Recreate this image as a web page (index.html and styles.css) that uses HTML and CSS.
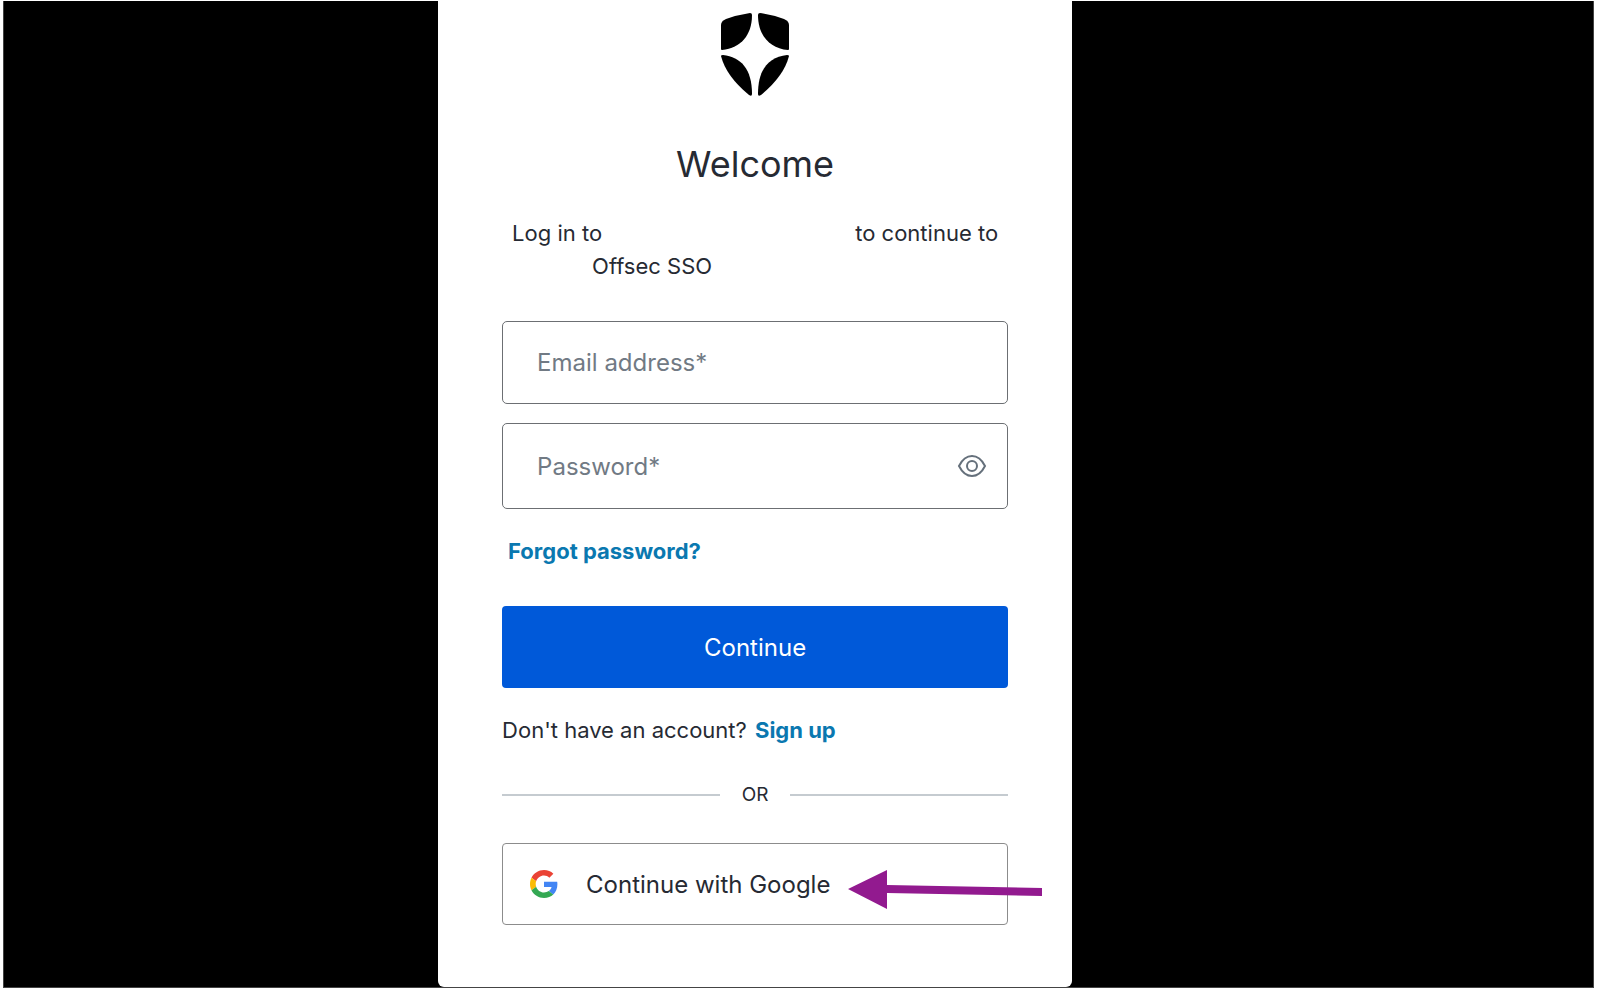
FILE: index.html
```html
<!DOCTYPE html>
<html lang="en">
<head>
    <meta charset="UTF-8">
    <meta name="viewport" content="width=device-width, initial-scale=1.0">
    <title>Log in | Offsec SSO</title>
    <link rel="stylesheet" href="styles.css">
</head>
<body>

<div class="page">
    <main class="card">
        <svg class="logo" viewBox="0 0 68 84" role="img" aria-label="Logo">
            <path d="M31 2C31 22 20 35 1 37Q0 37 0 36V12Q0 8 5 6Q16 2 29 0Q31 0 31 2Z"/>
            <path d="M37 2C37 22 48 35 67 37Q68 37 68 36V12Q68 8 63 6Q52 2 39 0Q37 0 37 2Z"/>
            <path d="M2 42C20 44 31 56 31 81Q31 84 28 82Q5 63 0 43Q0 42 2 42Z"/>
            <path d="M66 42C48 44 37 56 37 81Q37 84 40 82Q63 63 68 43Q68 42 66 42Z"/>
        </svg>

        <h1>Welcome</h1>
        <div class="intro">
            <p class="intro-line"><span>Log in to</span><span>to continue to</span></p>
            <p class="intro-app">Offsec SSO</p>
        </div>

        <form onsubmit="return false">
            <input type="text" id="email" class="field" placeholder="Email address*" aria-label="Email address">
            <div class="password-field">
                <input type="password" id="password" class="field" placeholder="Password*" aria-label="Password">
                <button type="button" class="eye-button" aria-label="Show password" onclick="togglePassword()">
                    <svg viewBox="0 0 30 24">
                        <path d="M2 12C5 6 9 2 15 2S25 6 28 12C25 18 21 22 15 22S5 18 2 12Z"/>
                        <circle cx="15" cy="12" r="5"/>
                    </svg>
                </button>
            </div>
            <a href="#" class="link forgot">Forgot password?</a>
            <button type="submit" class="button submit-button">Continue</button>
        </form>

        <p class="signup">Don't have an account? <a href="#" class="link">Sign up</a></p>

        <div class="divider"><span>OR</span></div>

        <div class="social">
            <button type="button" class="button google-button">
                <svg class="google-icon" viewBox="0 0 48 48">
                    <path fill="#ea4335" d="M24 9.5c3.54 0 6.71 1.22 9.21 3.6l6.85-6.85C35.9 2.38 30.47 0 24 0 14.62 0 6.51 5.38 2.56 13.22l7.98 6.19C12.43 13.72 17.74 9.5 24 9.5z"/>
                    <path fill="#4285f4" d="M46.98 24.55c0-1.57-.15-3.09-.38-4.55H24v9.02h12.94c-.58 2.96-2.26 5.48-4.78 7.18l7.73 6c4.51-4.18 7.09-10.36 7.09-17.65z"/>
                    <path fill="#fbbc05" d="M10.53 28.59c-.48-1.45-.76-2.99-.76-4.59s.27-3.14.76-4.59l-7.98-6.19C.92 16.46 0 20.12 0 24c0 3.88.92 7.54 2.56 10.78l7.97-6.19z"/>
                    <path fill="#34a853" d="M24 48c6.48 0 11.93-2.13 15.89-5.81l-7.73-6c-2.15 1.45-4.92 2.3-8.16 2.3-6.26 0-11.57-4.22-13.47-9.91l-7.98 6.19C6.51 42.62 14.62 48 24 48z"/>
                </svg>
                <span>Continue with Google</span>
            </button>
            <!-- arrow pointing at the Google button -->
            <svg class="arrow" viewBox="0 0 194 40" aria-hidden="true">
                <path d="M0 19L39 0V15L194 18V26L39 23V39Z"/>
            </svg>
        </div>
    </main>
</div>

<script>
    function togglePassword() {
        const password = document.getElementById('password');
        password.type = password.type === 'password' ? 'text' : 'password';
    }
</script>

</body>
</html>
```
FILE: styles.css
```css
* {
    box-sizing: border-box;
}
body {
    margin: 0;
    padding: 1px 6px 12px 3px;
    min-height: 100vh;
    display: flex;
    background-color: #fff;
    color: #262a33;
    font-family: Inter, "Liberation Sans", sans-serif;
    font-size: 22px;
}
.page {
    flex: 1;
    display: grid;
    grid-template-columns: 5fr minmax(auto, 634px) 6fr; /* card sits a little left of centre */
    background-color: #000;
    border: 1px solid #444;
    border-top: none;
}
.card {
    grid-column: 2;
    padding: 12px 64px 57px;
    background-color: #fff;
    border-radius: 0 0 6px 6px;
}
.logo {
    display: block;
    width: 68px;
    height: 84px;
    margin: 0 auto;
    fill: #000;
}
h1 {
    margin: 44px 0 0;
    font-size: 36px;
    font-weight: 400;
    line-height: 46px;
    text-align: center;
}
p {
    margin: 0;
    line-height: 33px;
}
.intro {
    margin: 30px 10px 38px;
}
.intro-line {
    display: flex;
    justify-content: space-between;
}
.intro-app {
    padding-left: 80px;
}
.field {
    display: block;
    width: 100%;
    height: 83px;
    padding: 0 34px;
    border: 1px solid #6c6f73;
    border-radius: 5px;
    background-color: #fff;
    color: #262a33;
    font-family: inherit;
    font-size: 24px;
}
.field::placeholder {
    color: #717a84;
    opacity: 1;
}
.password-field {
    position: relative;
    margin: 19px 0 26px;
}
.password-field .field {
    height: 86px;
    padding-right: 70px;
}
.eye-button {
    position: absolute;
    top: 0;
    bottom: 0;
    right: 21px;
    padding: 0;
    border: none;
    background: none;
    cursor: pointer;
}
.eye-button svg {
    display: block;
    width: 30px;
    height: 24px;
    fill: none;
    stroke: #65707b;
    stroke-width: 2;
}
.link {
    color: #0a78b0;
    font-weight: 700;
    text-decoration: none;
}
.forgot {
    display: block;
    margin: 0 6px 38px;
    line-height: 33px;
}
.button {
    display: flex;
    align-items: center;
    width: 100%;
    height: 82px;
    border-radius: 4px;
    font-family: inherit;
    font-size: 24px;
    cursor: pointer;
}
.submit-button {
    justify-content: center;
    border: none;
    background-color: #0059d9;
    color: #fff;
}
.signup {
    margin: 26px 0 31px;
}
.signup .link {
    margin-left: 2px;
}
.divider {
    display: flex;
    align-items: center;
    gap: 22px;
    margin-bottom: 32px;
    font-size: 19px;
    line-height: 33px;
}
.divider::before,
.divider::after {
    content: "";
    flex: 1;
    height: 2px;
    background-color: #c5cbd0;
}
.social {
    position: relative;
}
.google-button {
    gap: 28px;
    padding: 0 27px;
    border: 1px solid #8c8c8c;
    background-color: #fff;
    color: #262a33;
}
.google-icon {
    width: 28px;
    height: 28px;
}
.arrow {
    position: absolute;
    top: 27px;
    right: -34px;
    width: 194px;
    height: 40px;
    fill: #921a8f;
}
```
